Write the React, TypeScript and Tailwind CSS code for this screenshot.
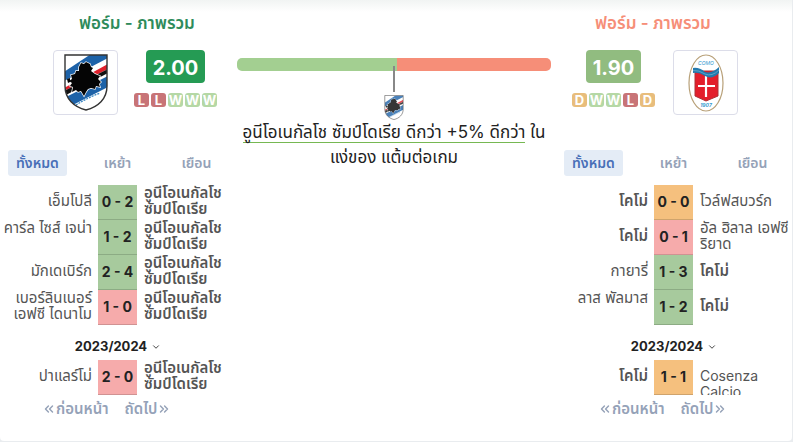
import { useState } from "react";
import { ChevronDown, ChevronsLeft, ChevronsRight } from "lucide-react";

type Result = "W" | "D" | "L";

type Match = {
  home: string;
  away: string;
  score: string;
  result: Result;
  own: "home" | "away";
  homeTop?: boolean;
  awayTop?: boolean;
};

const SAMPDORIA = "อูนีโอเนกัลโช ซัมป์โดเรีย";
const COMO = "โคโม่";

const sampdoriaRecent: Match[] = [
  { home: "เอ็มโปลี", away: SAMPDORIA, score: "0 - 2", result: "W", own: "away" },
  { home: "คาร์ล ไซส์ เจน่า", away: SAMPDORIA, score: "1 - 2", result: "W", own: "away", homeTop: true },
  { home: "มักเดเบิร์ก", away: SAMPDORIA, score: "2 - 4", result: "W", own: "away" },
  { home: "เบอร์ลินเนอร์ เอฟซี ไดนาโม", away: SAMPDORIA, score: "1 - 0", result: "L", own: "away" },
];

const sampdoriaPrevious: Match[] = [
  { home: "ปาแลร์โม่", away: SAMPDORIA, score: "2 - 0", result: "L", own: "away" },
];

const comoRecent: Match[] = [
  { home: COMO, away: "โวล์ฟสบวร์ก", score: "0 - 0", result: "D", own: "home" },
  { home: COMO, away: "อัล ฮิลาล เอฟซี ริยาด", score: "0 - 1", result: "L", own: "home" },
  { home: "กายารี่", away: COMO, score: "1 - 3", result: "W", own: "away" },
  { home: "ลาส พัลมาส", away: COMO, score: "1 - 2", result: "W", own: "away", homeTop: true },
];

const comoPrevious: Match[] = [
  { home: COMO, away: "Cosenza Calcio", score: "1 - 1", result: "D", own: "home", awayTop: true },
];

const tabs = ["ทั้งหมด", "เหย้า", "เยือน"];

const badgeColors = {
  W: "bg-[#b5d8a5]",
  D: "bg-[#e8bd7c]",
  L: "bg-[#c87477]",
};

const scoreColors = {
  W: "bg-[#a7ca9d] border-[#8cab84]",
  D: "bg-[#f5c07e] border-[#cfa36c]",
  L: "bg-[#f6abab] border-[#d09292]",
};

function SampdoriaCrest({ className }: { className: string }) {
  return (
    <svg viewBox="0 0 44 57" className={className} aria-hidden="true">
      <defs>
        <clipPath id="samp-shield">
          <path d="M1 1H43V32C43 45 34 53 22 56C10 53 1 45 1 32Z" />
        </clipPath>
      </defs>
      <g clipPath="url(#samp-shield)">
        <rect width="44" height="57" fill="#fff" />
        <path d="M0 18L27 0H44V4L0 27Z" fill="#1d62a8" />
        <path d="M0 34L44 10V15L0 37Z" fill="#df202b" />
        <path d="M0 37L44 15V19L0 42Z" fill="#111" />
        <path d="M0 44L44 22V33L3 54Z" fill="#1d62a8" />
      </g>
      {/* White halo keeps the head clear of the stripes */}
      <path
        d="M15 13L17 9L20 10L22 8L26 10L27 13L29 14L27 17L31 20L36 22L34 25L37 28L35 30L36 33L32 32L31 35L27 34L24 35L22 38L20 42L17 37L14 38L12 36L8 38L9 33L6 32L8 29L5 27L8 25L7 21L11 20L12 17L15 17Z"
        fill="#050505"
        stroke="#fff"
        strokeWidth="1.4"
        paintOrder="stroke"
      />
      <path d="M3 25L6 24V28L4 29Z" fill="#050505" />
      <path d="M12 51Q23 44 36 39" fill="none" stroke="#3987c3" strokeWidth="1.3" strokeDasharray="2 1" />
      <path
        d="M1 1H43V32C43 45 34 53 22 56C10 53 1 45 1 32Z"
        fill="none"
        stroke="#333"
        strokeWidth="1.4"
      />
    </svg>
  );
}

function ComoCrest({ className }: { className: string }) {
  return (
    <svg viewBox="0 0 36 58" className={className} aria-hidden="true">
      <ellipse cx="18" cy="29" rx="17" ry="28" fill="#fff" stroke="#b8a078" strokeWidth="1.2" />
      <path d="M7 17H30V42L18 47L7 42Z" fill="#e31e2b" stroke="#ad3036" strokeWidth="1" />
      <path d="M18 22V43M10 32H27" stroke="#fff" strokeWidth="2.2" />
      <path d="M5 14Q11 13 17 18Q24 20 31 13V19Q24 26 17 22Q11 18 5 19Z" fill="#2379ad" />
      <path d="M5 16.500Q11 16 17 20Q24 23 31 16" fill="none" stroke="#72b4d3" strokeWidth=".7" />
      <text x="18" y="11" textAnchor="middle" fontSize="5" fontStyle="italic" fill="#389bd0" fontFamily="Inter">COMO</text>
      <text x="18" y="53" textAnchor="middle" fontSize="5" fontStyle="italic" fontWeight="700" fill="#389bd0" fontFamily="Inter">1907</text>
    </svg>
  );
}

function Rating({ value, form, color }: { value: string; form: Result[]; color: string }) {
  return (
    <div className="flex flex-col items-center">
      <div className={`flex h-[33px] items-center rounded px-[7px] pt-[2px] text-xl font-bold text-white ${color}`}>
        {value}
      </div>
      <div className="mt-[10px] flex gap-[2px]">
        {form.map((r, i) => (
          <span
            key={i}
            className={`flex h-[14px] w-[15px] items-center justify-center rounded-[3px] pt-px text-[13px] leading-none font-bold text-white ${badgeColors[r]}`}
          >
            {r}
          </span>
        ))}
      </div>
    </div>
  );
}

function CrestBox({ children }: { children: React.ReactNode }) {
  return (
    <div className="flex size-[65px] items-center justify-center rounded border border-[#dcdde9]">{children}</div>
  );
}

// Breaks only at spaces, so Thai names are never split inside a word
function Words({ text }: { text: string }) {
  return (
    <span>
      {text.split(" ").map((word, i) => (
        <span key={i}>
          {i > 0 && " "}
          <span className="whitespace-nowrap">{word}</span>
        </span>
      ))}
    </span>
  );
}

function MatchTable({ matches }: { matches: Match[] }) {
  return (
    <table className="w-full table-fixed border-separate border-spacing-0 text-[15px] leading-4 text-[#555]">
      <tbody>
        {matches.map((m, i) => (
          <tr key={i}>
            <td className="w-[98px] p-0">
              <div
                className={`flex h-[35px] justify-end pr-[6px] text-right ${m.homeTop ? "items-start" : "items-center pb-1"} ${m.own === "home" ? "font-semibold" : ""}`}
              >
                <Words text={m.home} />
              </div>
            </td>
            <td className={`w-[39px] border-b p-0 text-center text-sm font-bold whitespace-nowrap text-[#222] ${scoreColors[m.result]}`}>
              {m.score}
            </td>
            <td className="p-0">
              <div
                className={`flex h-[35px] pl-[7px] ${m.awayTop ? "items-start overflow-hidden pt-2 text-sm leading-4" : "items-center pb-1"} ${m.own === "away" ? "font-semibold" : ""}`}
              >
                <Words text={m.away} />
              </div>
            </td>
          </tr>
        ))}
      </tbody>
    </table>
  );
}

function FormHistory({ recent, previous }: { recent: Match[]; previous: Match[] }) {
  const [active, setActive] = useState(0);

  return (
    <div>
      <div className="flex h-[26px] items-center pl-2 text-sm font-semibold">
        {tabs.map((tab, i) => (
          <div key={tab} className={i === 0 ? "w-[70px]" : "flex w-[79px] justify-center"}>
            <button
              type="button"
              onClick={() => setActive(i)}
              className={`h-[26px] rounded-[3px] px-2 ${active === i ? "bg-[#e4ecf6] text-[#4970b8]" : "text-[#95a2b8]"}`}
            >
              {tab}
            </button>
          </div>
        ))}
      </div>
      <div className="mt-[9px]">
        <MatchTable matches={recent} />
      </div>
      <button
        type="button"
        className="mx-auto flex h-[35px] items-center gap-1 pt-2 text-[13px] font-bold text-[#222]"
      >
        2023/2024
        <ChevronDown className="size-[10px]" />
      </button>
      <MatchTable matches={previous} />
      <div className="flex h-7 items-center gap-4 pl-[42px] text-[15px] font-semibold text-[#95a2b8]">
        <button type="button" className="flex items-center">
          <ChevronsLeft className="size-[14px]" strokeWidth={2.5} />
          ก่อนหน้า
        </button>
        <button type="button" className="flex items-center">
          ถัดไป
          <ChevronsRight className="size-[14px]" strokeWidth={2.5} />
        </button>
      </div>
    </div>
  );
}

export default function App() {
  return (
    <main className="min-h-screen bg-[#e9ecef] pr-px pb-px font-['Inter','Noto_Sans_Thai','Noto_Sans',sans-serif]">
      <div className="flex min-h-[calc(100vh-1px)] rounded-b bg-white bg-[linear-gradient(#f1f4f3,#fff_12px)]">
        {/* Home side */}
        <section className="w-[236px] shrink-0">
          <h2 className="flex h-[50px] items-center justify-center pb-[2px] pl-[38px] text-[17px] font-semibold text-[#2e8b5b]">
            ฟอร์ม - ภาพรวม
          </h2>
          <div className="flex h-[100px] items-start gap-4 pl-[53px]">
            <CrestBox>
              <SampdoriaCrest className="h-[57px] w-11" />
            </CrestBox>
            <Rating value="2.00" form={["L", "L", "W", "W", "W"]} color="bg-[#259b54]" />
          </div>
          <FormHistory recent={sampdoriaRecent} previous={sampdoriaPrevious} />
        </section>

        {/* Comparison */}
        <section className="flex min-w-0 flex-1 flex-col items-center pt-[58px] pr-[5px] pl-px">
          <div className="flex h-[13px] w-full overflow-hidden rounded-[5px]">
            <div className="w-[51%] bg-[#a3cf91]" />
            <div className="flex-1 bg-[#f68e78]" />
          </div>
          <div className="relative -mt-[5px] h-[26px] w-[2px] bg-[#888]" />
          <SampdoriaCrest className="mt-[3px] h-[25px] w-5 opacity-80" />
          <p className="text-center text-[17px] leading-[25px] text-[#222]">
            <span className="border-b border-[#76b852]">{SAMPDORIA} ดีกว่า +5% ดีกว่า</span> ใน
            <span className="inline-block">แง่ของ แต้มต่อเกม</span>
          </p>
        </section>

        {/* Away side */}
        <section className="w-[236px] shrink-0">
          <h2 className="flex h-[50px] items-center justify-center pr-[42px] pb-[2px] text-[17px] font-semibold text-[#f68e78]">
            ฟอร์ม - ภาพรวม
          </h2>
          <div className="flex h-[100px] items-start gap-[18px] pl-4">
            <Rating value="1.90" form={["D", "W", "W", "L", "D"]} color="bg-[#91bc80]" />
            <CrestBox>
              <ComoCrest className="h-[58px] w-9" />
            </CrestBox>
          </div>
          <FormHistory recent={comoRecent} previous={comoPrevious} />
        </section>
      </div>
    </main>
  );
}
